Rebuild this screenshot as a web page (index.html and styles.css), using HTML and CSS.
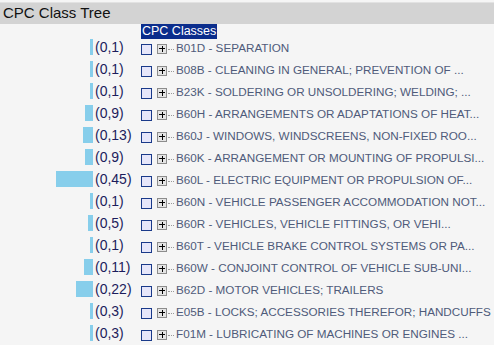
FILE: index.html
```html
<!DOCTYPE html>
<html lang="en">
<head>
    <meta charset="UTF-8">
    <title>CPC Class Tree</title>
    <link rel="stylesheet" href="styles.css">
</head>
<body>
    <div class="panel-title">CPC Class Tree</div>

    <div class="tree">
        <div class="tree-head"><span class="head-label">CPC Classes</span></div>

        <div class="row">
            <div class="bar-cell"><span class="bar" style="width: 3px"></span></div>
            <div class="count">(0,1)</div>
            <span class="check"></span><span class="plus"></span><span class="dots"></span>
            <span class="label">B01D - SEPARATION</span>
        </div>
        <div class="row">
            <div class="bar-cell"><span class="bar" style="width: 3px"></span></div>
            <div class="count">(0,1)</div>
            <span class="check"></span><span class="plus"></span><span class="dots"></span>
            <span class="label">B08B - CLEANING IN GENERAL; PREVENTION OF ...</span>
        </div>
        <div class="row">
            <div class="bar-cell"><span class="bar" style="width: 3px"></span></div>
            <div class="count">(0,1)</div>
            <span class="check"></span><span class="plus"></span><span class="dots"></span>
            <span class="label">B23K - SOLDERING OR UNSOLDERING; WELDING; ...</span>
        </div>
        <div class="row">
            <div class="bar-cell"><span class="bar" style="width: 8px"></span></div>
            <div class="count">(0,9)</div>
            <span class="check"></span><span class="plus"></span><span class="dots"></span>
            <span class="label">B60H - ARRANGEMENTS OR ADAPTATIONS OF HEAT...</span>
        </div>
        <div class="row">
            <div class="bar-cell"><span class="bar" style="width: 10px"></span></div>
            <div class="count">(0,13)</div>
            <span class="check"></span><span class="plus"></span><span class="dots"></span>
            <span class="label">B60J - WINDOWS, WINDSCREENS, NON-FIXED ROO...</span>
        </div>
        <div class="row">
            <div class="bar-cell"><span class="bar" style="width: 8px"></span></div>
            <div class="count">(0,9)</div>
            <span class="check"></span><span class="plus"></span><span class="dots"></span>
            <span class="label">B60K - ARRANGEMENT OR MOUNTING OF PROPULSI...</span>
        </div>
        <div class="row">
            <div class="bar-cell"><span class="bar" style="width: 37px"></span></div>
            <div class="count">(0,45)</div>
            <span class="check"></span><span class="plus"></span><span class="dots"></span>
            <span class="label">B60L - ELECTRIC EQUIPMENT OR PROPULSION OF...</span>
        </div>
        <div class="row">
            <div class="bar-cell"><span class="bar" style="width: 3px"></span></div>
            <div class="count">(0,1)</div>
            <span class="check"></span><span class="plus"></span><span class="dots"></span>
            <span class="label">B60N - VEHICLE PASSENGER ACCOMMODATION NOT...</span>
        </div>
        <div class="row">
            <div class="bar-cell"><span class="bar" style="width: 5px"></span></div>
            <div class="count">(0,5)</div>
            <span class="check"></span><span class="plus"></span><span class="dots"></span>
            <span class="label">B60R - VEHICLES, VEHICLE FITTINGS, OR VEHI...</span>
        </div>
        <div class="row">
            <div class="bar-cell"><span class="bar" style="width: 3px"></span></div>
            <div class="count">(0,1)</div>
            <span class="check"></span><span class="plus"></span><span class="dots"></span>
            <span class="label">B60T - VEHICLE BRAKE CONTROL SYSTEMS OR PA...</span>
        </div>
        <div class="row">
            <div class="bar-cell"><span class="bar" style="width: 9px"></span></div>
            <div class="count">(0,11)</div>
            <span class="check"></span><span class="plus"></span><span class="dots"></span>
            <span class="label">B60W - CONJOINT CONTROL OF VEHICLE SUB-UNI...</span>
        </div>
        <div class="row">
            <div class="bar-cell"><span class="bar" style="width: 17px"></span></div>
            <div class="count">(0,22)</div>
            <span class="check"></span><span class="plus"></span><span class="dots"></span>
            <span class="label">B62D - MOTOR VEHICLES; TRAILERS</span>
        </div>
        <div class="row">
            <div class="bar-cell"><span class="bar" style="width: 3px"></span></div>
            <div class="count">(0,3)</div>
            <span class="check"></span><span class="plus"></span><span class="dots"></span>
            <span class="label">E05B - LOCKS; ACCESSORIES THEREFOR; HANDCUFFS</span>
        </div>
        <div class="row">
            <div class="bar-cell"><span class="bar" style="width: 3px"></span></div>
            <div class="count">(0,3)</div>
            <span class="check"></span><span class="plus"></span><span class="dots"></span>
            <span class="label">F01M - LUBRICATING OF MACHINES OR ENGINES ...</span>
        </div>
    </div>
</body>
</html>
```

FILE: styles.css
```css
* {
    margin: 0;
    padding: 0;
    box-sizing: border-box;
}

body {
    font-family: "Liberation Sans", Arial, sans-serif;
    background-color: #f5f5f5;
    overflow: hidden;
}

.panel-title {
    margin-top: 2px;
    border-top: 1px solid #e2e2e2;
    height: 22px;
    padding: 1px 0 0 3px;
    background-color: #d3d3d3;
    font-size: 15px;
    color: #111;
}

.tree-head {
    padding-left: 141px;
    height: 12px;
}

.head-label {
    display: inline-block;
    vertical-align: top;
    height: 15px;
    padding: 0 1px;
    background-color: #0b2d8c;
    color: white;
    font-size: 12.5px;
    line-height: 15px;
}

.row {
    position: relative;
    display: flex;
    align-items: center;
    height: 22px;
    white-space: nowrap;
}

.row > * {
    flex-shrink: 0;
}

.bar-cell {
    width: 93px;
    display: flex;
    justify-content: flex-end;
}

.bar {
    display: block;
    height: 16px;
    background-color: #87ceeb;
}

.count {
    width: 48px;
    padding-left: 2px;
    font-size: 14px;
    color: #1c1c5c;
}

.check {
    width: 11px;
    height: 11px;
    margin-top: 5px;
    border: 1px solid #1a3a8a;
    background-color: #e6e6fa;
}

.plus {
    position: relative;
    width: 10px;
    height: 10px;
    margin: 4px 0 0 5px;
    border: 1px solid #8c8c8c;
    background-color: #e4e4e4;
}

.plus::before,
.plus::after {
    content: "";
    position: absolute;
    background-color: #000;
}

.plus::before {
    left: 1px;
    top: 3px;
    width: 6px;
    height: 1px;
}

.plus::after {
    left: 3.5px;
    top: 0.5px;
    width: 1px;
    height: 6px;
}

.dots {
    width: 6px;
    margin: 4px 2px 0 1px;
    border-top: 1px dotted #999;
}

.label {
    font-size: 11.7px;
    color: #4f5b7a;
}
```
